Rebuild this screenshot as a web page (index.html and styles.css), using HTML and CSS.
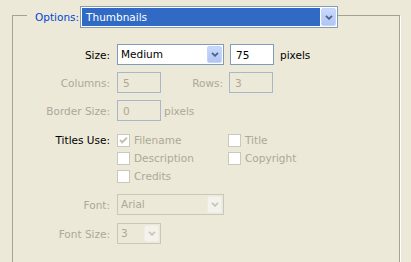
FILE: index.html
```html
<!DOCTYPE html>
<html lang="en">
<head>
    <meta charset="UTF-8">
    <title>Thumbnail Options</title>
    <link rel="stylesheet" href="styles.css">
</head>
<body>
    <fieldset class="group">
        <legend class="group-title">
            <span class="group-label">Options:</span>
            <div class="combo combo-wide">
                <span class="combo-text combo-selected">Thumbnails</span>
                <span class="combo-btn"><svg width="8" height="5" viewBox="0 0 8 5"><path d="M1 0.8 L4 3.8 L7 0.8" fill="none" stroke="#4d6185" stroke-width="1.8"/></svg></span>
            </div>
        </legend>

        <div class="form">
            <div class="row">
                <label class="lbl">Size:</label>
                <div class="ctrls">
                    <div class="combo combo-med">
                        <span class="combo-text">Medium</span>
                        <span class="combo-btn"><svg width="8" height="5" viewBox="0 0 8 5"><path d="M1 0.8 L4 3.8 L7 0.8" fill="none" stroke="#4d6185" stroke-width="1.8"/></svg></span>
                    </div>
                    <input class="field" type="text" value="75">
                    <span class="unit">pixels</span>
                </div>
            </div>

            <div class="row off">
                <label class="lbl">Columns:</label>
                <div class="ctrls">
                    <input class="field" type="text" value="5" disabled>
                    <label class="lbl lbl-inner">Rows:</label>
                    <input class="field" type="text" value="3" disabled>
                </div>
            </div>

            <div class="row off">
                <label class="lbl">Border Size:</label>
                <div class="ctrls">
                    <input class="field" type="text" value="0" disabled>
                    <span class="unit unit-near">pixels</span>
                </div>
            </div>

            <div class="row row-checks">
                <label class="lbl lbl-top">Titles Use:</label>
                <div class="checks">
                    <div class="check"><span class="box"><svg width="11" height="11" viewBox="0 0 11 11"><path d="M2 5 L4.3 7.3 L9 2.6" fill="none" stroke="#c4c1b1" stroke-width="2"/></svg></span>Filename</div>
                    <div class="check"><span class="box"></span>Title</div>
                    <div class="check"><span class="box"></span>Description</div>
                    <div class="check"><span class="box"></span>Copyright</div>
                    <div class="check"><span class="box"></span>Credits</div>
                </div>
            </div>

            <div class="row off row-font">
                <label class="lbl">Font:</label>
                <div class="ctrls">
                    <div class="combo combo-med">
                        <span class="combo-text">Arial</span>
                        <span class="combo-btn"><svg width="8" height="5" viewBox="0 0 8 5"><path d="M1 0.8 L4 3.8 L7 0.8" fill="none" stroke="#c9c6b6" stroke-width="1.8"/></svg></span>
                    </div>
                </div>
            </div>

            <div class="row off">
                <label class="lbl">Font Size:</label>
                <div class="ctrls">
                    <div class="combo combo-small">
                        <span class="combo-text">3</span>
                        <span class="combo-btn"><svg width="8" height="5" viewBox="0 0 8 5"><path d="M1 0.8 L4 3.8 L7 0.8" fill="none" stroke="#c9c6b6" stroke-width="1.8"/></svg></span>
                    </div>
                </div>
            </div>
        </div>
    </fieldset>
</body>
</html>
```

FILE: styles.css
```css
body {
    margin: 0;
    padding: 6px 0 0 12px;
    background-color: #ece9d8;
    font-family: "DejaVu Sans", sans-serif;
    font-size: 10.5px;
    color: #000;
    overflow: hidden;
}
.group {
    margin: 0;
    padding: 19px 0 60px 0;
    width: 388px;
    box-sizing: border-box;
    border: 1px solid #a5a290;
    box-shadow: 1px 1px 0 #fff;
}
.group-title {
    display: flex;
    align-items: flex-start;
    height: 19px;
    margin-left: 14px;
    padding: 0 0 0 8px;
}
.group-label {
    color: #0046d5;
    line-height: 22px;
    margin-right: 1px;
}
.form {
    display: flex;
    flex-direction: column;
    gap: 7px;
}
.row {
    display: grid;
    grid-template-columns: 97px auto;
    column-gap: 7px;
    align-items: center;
}
.row-checks {
    align-items: start;
    margin-top: 3px;
}
.row-font {
    margin-top: 2px;
    margin-bottom: 1px;
}
.lbl {
    text-align: right;
}
.lbl-top {
    line-height: 18px;
}
.lbl-inner {
    width: 56px;
}
.ctrls {
    display: flex;
    align-items: center;
    gap: 6px;
}
.unit-near {
    margin-left: -3px;
}
.field {
    width: 44px;
    height: 21px;
    box-sizing: border-box;
    margin: 0;
    padding: 0 0 0 5px;
    border: 1px solid #7f9db9;
    background-color: #fff;
    font: inherit;
    color: #000;
}
.off {
    color: #aca899;
}
.off .field {
    background-color: transparent;
    border-color: #a9b7ca;
    color: #aca899;
}

/* combo boxes */
.combo {
    display: flex;
    height: 21px;
    box-sizing: border-box;
    border: 1px solid #7f9db9;
    background-color: #fff;
}
.combo-wide {
    width: 258px;
    height: 22px;
}
.combo-med {
    width: 107px;
}
.combo-small {
    width: 44px;
}
.combo-text {
    flex: 1;
    padding-left: 3px;
    line-height: 19px;
    white-space: nowrap;
    overflow: hidden;
}
.combo-selected {
    margin: 1px 1px 1px 1px;
    padding-left: 4px;
    line-height: 18px;
    background-color: #316ac5;
    color: #fff;
}
.combo-btn {
    width: 15px;
    margin: 1px 1px 1px 0;
    border: 1px solid #c4d3fb;
    border-radius: 2px;
    box-sizing: border-box;
    background: linear-gradient(#c9d8fc, #b1c5f4);
    display: flex;
    align-items: center;
    justify-content: center;
}
.off .combo {
    border-color: #c9c7ba;
    background-color: transparent;
}
.off .combo-btn {
    border-color: #eeece3;
    background: #f3f2ec;
}

/* checkboxes */
.checks {
    display: grid;
    grid-template-columns: 111px auto;
    color: #aca899;
}
.check {
    display: flex;
    align-items: center;
    gap: 4px;
    height: 18px;
}
.box {
    width: 13px;
    height: 13px;
    box-sizing: border-box;
    border: 1px solid #cac8bb;
    background-color: #fff;
    display: flex;
    align-items: center;
    justify-content: center;
}
```
